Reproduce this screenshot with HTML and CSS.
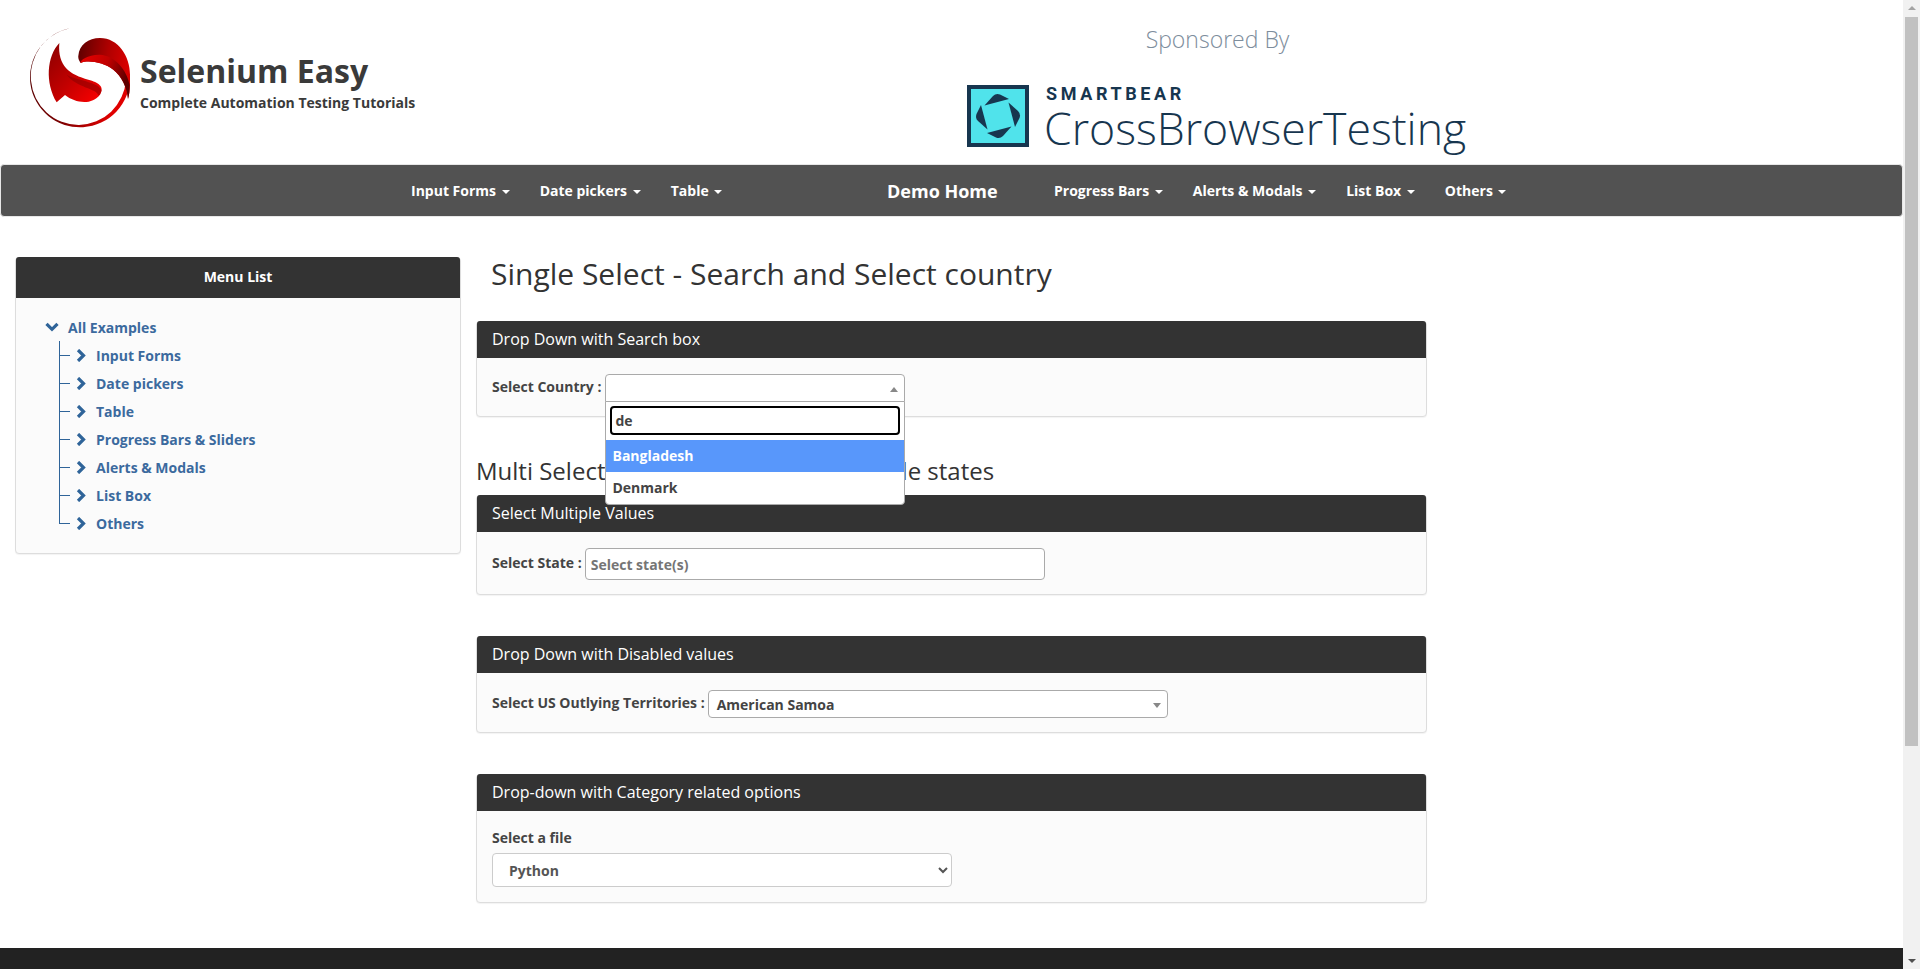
FILE: index.html
```html
<!DOCTYPE html>
<html lang="en">
<head>
<meta charset="utf-8">
<title>Selenium Easy - Single Select</title>
<link rel="stylesheet" href="styles.css">
</head>
<body>
<div class="page">
  <header class="site-header">
    <div class="brand">
      <svg class="brand-logo" viewBox="30 25 300 300" aria-hidden="true">
        <defs>
          <linearGradient id="ring" x1="0" y1="0" x2="1" y2="0.4">
            <stop offset="0" stop-color="#4a0000"/>
            <stop offset="0.6" stop-color="#7c0000"/>
            <stop offset="1" stop-color="#e00000"/>
          </linearGradient>
          <linearGradient id="upper" x1="0" y1="0" x2="1" y2="0.2">
            <stop offset="0" stop-color="#5a0000"/>
            <stop offset="0.6" stop-color="#b00000"/>
            <stop offset="1" stop-color="#d80000"/>
          </linearGradient>
          <linearGradient id="band" x1="0" y1="0" x2="1" y2="0.3">
            <stop offset="0" stop-color="#e80000"/>
            <stop offset="0.55" stop-color="#c00000"/>
            <stop offset="1" stop-color="#5e0000"/>
          </linearGradient>
          <linearGradient id="lower" x1="0" y1="0" x2="1" y2="1">
            <stop offset="0" stop-color="#8a0000"/>
            <stop offset="0.5" stop-color="#c00000"/>
            <stop offset="1" stop-color="#ff0000"/>
          </linearGradient>
        </defs>
        <path fill="url(#ring)" d="M150 26A150 150 0 1 0 330 174L318 180A143 146 0 1 1 150 26Z"/>
        <path fill="url(#upper)" d="M175 108C178 75 205 55 240 55C295 55 330 110 330 165C331 195 330 215 324 238C322 205 305 170 280 150C250 128 205 120 182 130C176 122 174 115 175 108Z"/>
        <path fill="url(#band)" d="M182 130C178 122 205 104 240 105C285 108 320 150 329 195C329 212 328 225 324 238C322 205 305 170 280 150C250 128 205 120 182 130Z"/>
        <path fill="url(#lower)" d="M118 70C80 110 75 190 110 248L135 226C165 250 215 258 240 225C255 200 235 188 205 180C150 165 112 140 118 70Z"/>
        <path fill="#860000" opacity=".55" d="M140 165C165 182 235 185 245 212C243 220 240 224 236 228C230 205 170 205 140 165Z"/>
      </svg>
      <div class="brand-text">
        <div class="brand-name">Selenium Easy</div>
        <div class="brand-tag">Complete Automation Testing Tutorials</div>
      </div>
    </div>
    <div class="sponsor">
      <div class="sponsor-title">Sponsored By</div>
      <div class="sponsor-logo">
        <svg class="cbt-mark" viewBox="0 0 62 62" aria-hidden="true">
          <rect x="2" y="2" width="58" height="58" fill="#50e3eb" stroke="#17364f" stroke-width="4"/>
          <g fill="#17364f">
            <path d="M17.5 20.5L26 11Q29 8 33 9.5L42 14Z"/>
            <path transform="rotate(90 31 31)" d="M17.5 20.5L26 11Q29 8 33 9.5L42 14Z"/>
            <path transform="rotate(180 31 31)" d="M17.5 20.5L26 11Q29 8 33 9.5L42 14Z"/>
            <path transform="rotate(270 31 31)" d="M17.5 20.5L26 11Q29 8 33 9.5L42 14Z"/>
          </g>
        </svg>
        <div class="cbt-text">
          <div class="cbt-small">SMARTBEAR</div>
          <div class="cbt-large">CrossBrowserTesting</div>
        </div>
      </div>
    </div>
  </header>

  <nav class="navbar">
    <ul class="nav-left">
      <li class="nav-link">Input Forms <span class="caret"></span></li>
      <li class="nav-link">Date pickers <span class="caret"></span></li>
      <li class="nav-link">Table <span class="caret"></span></li>
    </ul>
    <div class="nav-home">Demo Home</div>
    <ul class="nav-right">
      <li class="nav-link">Progress Bars <span class="caret"></span></li>
      <li class="nav-link">Alerts &amp; Modals <span class="caret"></span></li>
      <li class="nav-link">List Box <span class="caret"></span></li>
      <li class="nav-link">Others <span class="caret"></span></li>
    </ul>
  </nav>

  <div class="content">
    <aside class="sidebar">
      <div class="panel-heading side-heading">Menu List</div>
      <div class="tree">
        <div class="tree-root">
          <svg class="chev-down" viewBox="0 0 14 10" aria-hidden="true"><path d="M1.5 1.8L7 7.3L12.5 1.8"/></svg>
          <a class="tree-link">All Examples</a>
        </div>
        <ul class="tree-list">
          <li class="tree-item"><svg class="chev-right" viewBox="0 0 10 13" aria-hidden="true"><path d="M2 1L7.5 6.5L2 12"/></svg><a class="tree-link">Input Forms</a></li>
          <li class="tree-item"><svg class="chev-right" viewBox="0 0 10 13" aria-hidden="true"><path d="M2 1L7.5 6.5L2 12"/></svg><a class="tree-link">Date pickers</a></li>
          <li class="tree-item"><svg class="chev-right" viewBox="0 0 10 13" aria-hidden="true"><path d="M2 1L7.5 6.5L2 12"/></svg><a class="tree-link">Table</a></li>
          <li class="tree-item"><svg class="chev-right" viewBox="0 0 10 13" aria-hidden="true"><path d="M2 1L7.5 6.5L2 12"/></svg><a class="tree-link">Progress Bars &amp; Sliders</a></li>
          <li class="tree-item"><svg class="chev-right" viewBox="0 0 10 13" aria-hidden="true"><path d="M2 1L7.5 6.5L2 12"/></svg><a class="tree-link">Alerts &amp; Modals</a></li>
          <li class="tree-item"><svg class="chev-right" viewBox="0 0 10 13" aria-hidden="true"><path d="M2 1L7.5 6.5L2 12"/></svg><a class="tree-link">List Box</a></li>
          <li class="tree-item"><svg class="chev-right" viewBox="0 0 10 13" aria-hidden="true"><path d="M2 1L7.5 6.5L2 12"/></svg><a class="tree-link">Others</a></li>
        </ul>
      </div>
    </aside>

    <main class="main">
      <h2 class="page-title">Single Select - Search and Select country</h2>

      <section class="panel">
        <div class="panel-heading">Drop Down with Search box</div>
        <div class="panel-body body-country">
          <label class="field-label">Select Country :</label>
          <div class="combo">
            <div class="combo-box combo-open"><span class="arrow-up"></span></div>
            <div class="combo-drop">
              <div class="combo-search"><input class="search-input" type="text" value="de"></div>
              <div class="combo-option option-active">Bangladesh</div>
              <div class="combo-option">Denmark</div>
            </div>
          </div>
        </div>
      </section>

      <h3 class="section-title">Multi Select - Search and Select multiple states</h3>

      <section class="panel">
        <div class="panel-heading">Select Multiple Values</div>
        <div class="panel-body body-state">
          <label class="field-label">Select State :</label>
          <input class="state-input" type="text" placeholder="Select state(s)">
        </div>
      </section>

      <section class="panel panel-spaced">
        <div class="panel-heading">Drop Down with Disabled values</div>
        <div class="panel-body body-territory">
          <label class="field-label">Select US Outlying Territories :</label>
          <div class="combo-box territory-box">American Samoa<span class="arrow-down"></span></div>
        </div>
      </section>

      <section class="panel panel-spaced">
        <div class="panel-heading">Drop-down with Category related options</div>
        <div class="panel-body body-file">
          <label class="field-label file-label">Select a file</label>
          <select class="file-select">
            <option>Python</option>
            <option>Java</option>
            <option>C#</option>
          </select>
        </div>
      </section>
    </main>
  </div>

  <footer class="site-footer"></footer>
</div>

<div class="scrollbar" aria-hidden="true">
  <span class="scroll-up"></span>
  <div class="scroll-track"><div class="scroll-thumb"></div></div>
  <span class="scroll-down"></span>
</div>
</body>
</html>
```
FILE: styles.css
```css
* { box-sizing: border-box; }

html, body {
  height: 100%;
  margin: 0;
}

body {
  display: flex;
  overflow: hidden;
  background: #fff;
  color: #333;
  font-family: "Open Sans", "Liberation Sans", sans-serif;
  font-size: 14px;
}

ul { margin: 0; padding: 0; list-style: none; }

.page {
  flex: 1;
  min-width: 0;
  display: flex;
  flex-direction: column;
  overflow: hidden;
}

/* header */
.site-header {
  height: 164px;
  flex: none;
  display: flex;
}

.brand {
  width: 965px;
  padding: 28px 0 0 30px;
  display: flex;
  align-items: flex-start;
}

.brand-logo { width: 100px; height: 100px; flex: none; }

.brand-text { margin: 23px 0 0 10px; }

.brand-name {
  font-size: 32px;
  font-weight: 700;
  line-height: 40px;
  color: #3a3a3a;
}

.brand-tag {
  font-size: 14px;
  font-weight: 700;
  line-height: 20px;
  color: #3a3a3a;
  margin-top: 2px;
}

.sponsor {
  width: 505px;
  display: flex;
  flex-direction: column;
  align-items: center;
}

.sponsor-title {
  margin-top: 23px;
  font-size: 23px;
  font-weight: 300;
  line-height: 33px;
  color: #7d8d9c;
}

.sponsor-logo {
  margin-top: 29px;
  display: flex;
  align-self: flex-start;
  margin-left: 2px;
}

.cbt-mark { width: 62px; height: 62px; flex: none; }

.cbt-text { margin-left: 17px; }

.cbt-small {
  font-family: Roboto, sans-serif;
  font-size: 18px;
  font-weight: 700;
  letter-spacing: 3.6px;
  line-height: 18px;
  color: #17364f;
}

.cbt-large {
  font-size: 44.6px;
  font-weight: 350;
  line-height: 44px;
  margin-top: 3px;
  margin-left: -2px;
  color: #17364f;
  white-space: nowrap;
}

/* nav */
.navbar {
  flex: none;
  height: 53px;
  padding-left: 395px;
  display: flex;
  align-items: center;
  background: #525252;
  border: 1px solid #e7e7e7;
  border-radius: 4px;
  color: #fff;
}

.nav-left, .nav-right { display: flex; }
.nav-left { width: 476px; }

.nav-link {
  padding: 0 15px;
  font-size: 14px;
  font-weight: 700;
  white-space: nowrap;
}

.nav-home {
  width: 167px;
  padding-left: 15px;
  font-size: 18px;
  font-weight: 700;
  white-space: nowrap;
}

.caret {
  display: inline-block;
  width: 0;
  height: 0;
  margin-left: 2px;
  vertical-align: middle;
  border-top: 4px solid #fff;
  border-left: 4px solid transparent;
  border-right: 4px solid transparent;
}

/* content */
.content {
  flex: none;
  display: flex;
  align-items: flex-start;
  padding: 40px 0 0 15px;
  gap: 15px;
}

.sidebar {
  width: 446px;
  height: 297px;
  flex: none;
  background: #fbfbfb;
  border: 1px solid #ddd;
  border-radius: 4px;
  box-shadow: 0 1px 1px rgba(0, 0, 0, .05);
}

.panel-heading {
  margin-top: -1px;
  height: 37px;
  padding: 7px 15px;
  background: #333;
  border-radius: 3px 3px 0 0;
  color: #fff;
  font-size: 16px;
  line-height: 22px;
}

.side-heading {
  height: 41px;
  padding: 9px 15px;
  font-size: 14px;
  font-weight: 700;
  text-align: center;
}

.tree { padding: 15px 0 0 29px; }

.tree-root {
  display: flex;
  align-items: center;
  height: 28px;
}

.tree-link {
  color: #3b6a9e;
  font-size: 14px;
  font-weight: 700;
  white-space: nowrap;
}

.chev-down {
  width: 14px;
  height: 10px;
  margin-right: 9px;
  fill: none;
  stroke: #2f6499;
  stroke-width: 3.2;
}

.chev-right {
  width: 10px;
  height: 13px;
  margin-right: 10px;
  fill: none;
  stroke: #2f6499;
  stroke-width: 3.2;
}

.tree-list { margin-left: 14px; }

.tree-item {
  position: relative;
  display: flex;
  align-items: center;
  height: 28px;
  padding-left: 17px;
}

.tree-item::before {
  content: "";
  position: absolute;
  left: 0;
  top: 0;
  width: 10px;
  height: 14px;
  border-left: 1px solid #2f6499;
  border-bottom: 1px solid #2f6499;
}

.tree-item::after {
  content: "";
  position: absolute;
  left: 0;
  top: 14px;
  bottom: 0;
  border-left: 1px solid #2f6499;
}

.tree-item:last-child::after { display: none; }

/* main */
.main {
  width: 951px;
  flex: none;
}

.page-title {
  margin: 0 0 31px;
  padding-left: 15px;
  font-size: 30px;
  font-weight: 400;
  line-height: 33px;
  color: #333;
}

.section-title {
  margin: 41px 0 11px;
  font-size: 24px;
  font-weight: 400;
  line-height: 26px;
  color: #333;
}

.panel {
  background: #fbfbfb;
  border: 1px solid #ddd;
  border-radius: 4px;
  box-shadow: 0 1px 1px rgba(0, 0, 0, .05);
}

.panel-spaced { margin-top: 41px; }

.panel-body { display: flex; align-items: flex-start; padding: 0 15px; }

.body-country { height: 58px; padding-top: 16px; }
.body-state { height: 62px; padding-top: 16px; }
.body-state .field-label { line-height: 30px; margin-right: 3px; }
.body-territory { height: 59px; padding-top: 17px; }
.body-territory .field-label { margin-right: 3px; }
.body-file { height: 91px; flex-direction: column; padding-top: 17px; }

.field-label {
  color: #444;
  font-size: 14px;
  font-weight: 700;
  line-height: 26px;
  white-space: nowrap;
  margin-right: 4px;
}

.body-file .file-label { line-height: 20px; margin: 0 0 5px; }

.combo { position: relative; }

.combo-box {
  position: relative;
  height: 28px;
  background: #fff;
  border: 1px solid #aaa;
  border-radius: 4px;
  color: #444;
  font-size: 14px;
  font-weight: 700;
  line-height: 28px;
  padding-left: 8px;
}

.combo-open {
  width: 300px;
  border-radius: 4px 4px 0 0;
}

.territory-box { width: 460px; }

.arrow-up, .arrow-down {
  position: absolute;
  right: 6px;
  top: 12px;
  width: 0;
  height: 0;
  border-left: 4px solid transparent;
  border-right: 4px solid transparent;
}

.arrow-up { border-bottom: 5px solid #888; }
.arrow-down { border-top: 5px solid #888; }

.combo-drop {
  position: absolute;
  z-index: 5;
  left: 0;
  top: 27px;
  width: 300px;
  height: 104px;
  background: #fff;
  border: 1px solid #aaa;
  border-radius: 0 0 4px 4px;
  color: #444;
  overflow: hidden;
}

.combo-search { padding: 4px; height: 38px; }

.search-input {
  display: block;
  width: 100%;
  height: 29px;
  padding: 0 3px;
  border: 2px solid #000;
  border-radius: 4px;
  outline: none;
  background: #fff;
  color: #444;
  font: 700 14px "Open Sans", sans-serif;
}

.combo-option {
  height: 32px;
  padding-left: 6px;
  font-size: 14px;
  font-weight: 700;
  line-height: 32px;
}

.option-active { background: #5897fb; color: #fff; }

.state-input {
  width: 460px;
  height: 32px;
  padding: 0 5px;
  background: #fff;
  border: 1px solid #aaa;
  border-radius: 4px;
  outline: none;
  font: 700 14px "Open Sans", sans-serif;
}

.state-input::placeholder { color: #757575; opacity: 1; }

.file-select {
  width: 460px;
  height: 34px;
  padding: 6px 12px;
  background: #fff;
  border: 1px solid #ccc;
  border-radius: 4px;
  color: #555;
  font: 700 14px "Open Sans", sans-serif;
}

.site-footer {
  flex: 1;
  margin-top: 45px;
  background: #222;
}

/* scrollbar */
.scrollbar {
  width: 17px;
  flex: none;
  display: flex;
  flex-direction: column;
  align-items: center;
  background: #f1f1f1;
}

.scroll-up, .scroll-down {
  flex: none;
  width: 0;
  height: 0;
  border-left: 4px solid transparent;
  border-right: 4px solid transparent;
}

.scroll-up { margin-top: 6px; border-bottom: 4px solid #a3a3a3; }
.scroll-down { margin: 0 0 6px; border-top: 4px solid #505050; }

.scroll-track { flex: 1; width: 100%; padding: 7px 2px 0; }

.scroll-thumb { height: 729px; background: #c1c1c1; }
```
